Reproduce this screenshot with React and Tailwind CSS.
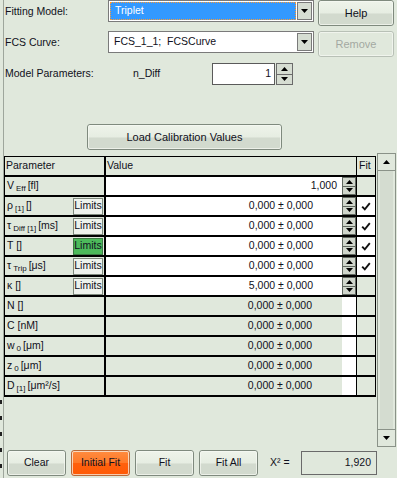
import React from "react";

const font = { fontFamily: '"Liberation Sans", Arial, sans-serif' };

function Tri({ down = false, size = 7 }) {
  return (
    <svg width={size} height={4} viewBox="0 0 7 4" className="block">
      {down ? <polygon points="0,0 7,0 3.5,4" fill="#000" /> : <polygon points="0,4 7,4 3.5,0" fill="#000" />}
    </svg>
  );
}

function Btn({ children, className = "", disabled = false, orange = false }) {
  const bg = orange
    ? "bg-[linear-gradient(to_bottom,#ff8c40_0%,#ff7a28_50%,#ff600c_52%,#ff5a06_100%)] border-[#b86a3a]"
    : disabled
    ? "bg-[#e0e8dc] border-[#b8c0b6]"
    : "bg-[linear-gradient(to_bottom,#eef3ea_0%,#e6ede2_50%,#d2dace_54%,#d2dace_100%)] border-[#7f8a7e]";
  return (
    <div
      className={`flex items-center justify-center rounded-[3px] border ${bg} ${
        disabled ? "text-[#a3a8a2]" : "text-[#101020]"
      } ${className}`}
    >
      <div className="flex h-full w-full items-center justify-center rounded-[2px] border border-[#f6f9f4]/70">{children}</div>
    </div>
  );
}

function Spin({ h = 18 }) {
  return (
    <div className="flex w-[14px] flex-col" style={{ height: h }}>
      <div className="flex flex-1 items-center justify-center border border-[#606860] bg-[#d0d6cc]">
        <Tri />
      </div>
      <div className="flex flex-1 items-center justify-center border border-t-0 border-[#606860] bg-[#d0d6cc]">
        <Tri down />
      </div>
    </div>
  );
}

function Check() {
  return (
    <svg width="10" height="9" viewBox="0 0 10 9">
      <path d="M1.2 4.6 L3.8 7.4 L8.8 1.2" stroke="#111" strokeWidth="1.9" fill="none" />
    </svg>
  );
}

function Sub({ children }) {
  return <span className="relative top-[2px] mx-[2px] text-[8px]">{children}</span>;
}

const rows = [
  { label: <>V<Sub>Eff</Sub>[fl]</>, value: "1,000", spin: true, white: true, right: true },
  { label: <>ρ<Sub>[1]</Sub>[]</>, value: "0,000 ± 0,000", spin: true, white: true, limits: "n", fit: true },
  { label: <>τ<Sub>Diff [1]</Sub>[ms]</>, value: "0,000 ± 0,000", spin: true, white: true, limits: "n", fit: true },
  { label: <>T []</>, value: "0,000 ± 0,000", spin: true, white: true, limits: "g", fit: true },
  { label: <>τ<Sub>Trip</Sub>[μs]</>, value: "0,000 ± 0,000", spin: true, white: true, limits: "n", fit: true },
  { label: <>κ []</>, value: "5,000 ± 0,000", spin: true, white: true, limits: "n" },
  { label: <>N []</>, value: "0,000 ± 0,000" },
  { label: <>C [nM]</>, value: "0,000 ± 0,000" },
  { label: <>w<Sub>0</Sub>[μm]</>, value: "0,000 ± 0,000" },
  { label: <>z<Sub>0</Sub>[μm]</>, value: "0,000 ± 0,000" },
  { label: <>D<Sub>[1]</Sub>[μm²/s]</>, value: "0,000 ± 0,000" },
];

function Row({ r }) {
  return (
    <div className="flex h-[20px] border-b-2 border-black">
      <div className="flex w-[99px] items-center justify-between pl-[2px] pr-[1px]">
        <span className="whitespace-nowrap">{r.label}</span>
        {r.limits && (
          <div
            className={`flex h-[17px] w-[30px] items-center justify-center border ${
              r.limits === "g" ? "border-[#3d7a45] bg-[#4dba5b]" : "border-[#7f8a7e] bg-[#eef2ec]"
            } text-[#101020]`}
          >
            Limits
          </div>
        )}
      </div>
      <div className="w-[2px] bg-black" />
      <div className={`flex w-[236px] items-center justify-end ${r.white ? "bg-white pr-[5px]" : "pr-[30px]"}`}>
        {r.right ? r.value : <span className={r.white ? "pr-[24px]" : ""}>{r.value}</span>}
      </div>
      <div className="flex w-[14px] items-center bg-white">{r.spin && <Spin />}</div>
      <div className="w-[1px] bg-black" />
      <div className={`flex w-[18px] items-center justify-center ${r.fit ? "bg-white" : ""}`}>{r.fit && <Check />}</div>
    </div>
  );
}

export default function App() {
  return (
    <div className="flex h-[478px] w-[397px] overflow-hidden bg-[#e0e8dc] text-[10.5px] text-[#101020]" style={font}>
      <div className="flex w-[3px] flex-col justify-end gap-[12px] pb-[10px]">
        {[0, 1, 2, 3, 4].map((i) => (
          <div key={i} className="h-[4px] w-[2px] bg-[#202020]" />
        ))}
      </div>
      <div className="w-[1px] bg-[#9ea69c]" />
      <div className="flex flex-1 flex-col">
        {/* row 1 */}
        <div className="flex h-[26px] items-start">
          <div className="w-[104px] pl-[1px] pt-[4px]">Fitting Model:</div>
          <div className="flex h-[22px] w-[206px] items-center border border-[#7a7a7a] bg-white p-[1px]">
            <div className="flex h-full flex-1 items-center border border-dotted border-[#ff9a30] bg-[#3399ff] pl-[4px] text-white">
              Triplet
            </div>
            <div className="ml-[1px] flex h-full w-[15px] items-center justify-center border border-[#7a7a7a] bg-[#d6ddd2]">
              <Tri down />
            </div>
          </div>
          <Btn className="ml-[4px] h-[26px] w-[76px] text-[11px]">Help</Btn>
        </div>
        {/* row 2 */}
        <div className="mt-[5px] flex h-[26px] items-start">
          <div className="w-[104px] pl-[1px] pt-[4px]">FCS Curve:</div>
          <div className="flex h-[22px] w-[206px] items-center border border-[#7a7a7a] bg-white p-[1px]">
            <div className="flex h-full flex-1 items-center pl-[4px] whitespace-pre">FCS_1_1;  FCSCurve</div>
            <div className="ml-[1px] flex h-full w-[15px] items-center justify-center border border-[#7a7a7a] bg-[#d6ddd2]">
              <Tri down />
            </div>
          </div>
          <Btn disabled className="ml-[4px] h-[26px] w-[76px] text-[11px]">Remove</Btn>
        </div>
        {/* row 3 */}
        <div className="mt-[6px] flex h-[22px] items-center">
          <div className="w-[129px] pl-[1px]">Model Parameters:</div>
          <div className="w-[79px]">n_Diff</div>
          <div className="flex h-[22px] w-[63px] items-center justify-end border border-[#5a5a5a] bg-white pr-[3px]">1</div>
          <div className="ml-[1px] flex h-[22px] w-[17px] flex-col">
            <div className="flex flex-1 items-center justify-center border border-[#6a6a6a] bg-[#d6ddd2]">
              <Tri />
            </div>
            <div className="flex flex-1 items-center justify-center border border-t-0 border-[#6a6a6a] bg-[#d6ddd2]">
              <Tri down />
            </div>
          </div>
        </div>
        {/* load button */}
        <div className="mt-[39px] flex">
          <Btn className="ml-[83px] h-[26px] w-[195px] text-[11px]">Load Calibration Values</Btn>
        </div>
        {/* table + scrollbar */}
        <div className="mt-[3px] flex h-[294px] items-start">
          <div className="mt-[3px] flex w-[372px] flex-col border-x border-t border-black">
            <div className="flex h-[20px] border-b-2 border-black">
              <div className="flex w-[99px] items-center pl-[1px]">Parameter</div>
              <div className="w-[2px] bg-black" />
              <div className="flex w-[250px] items-center pl-[1px]">Value</div>
              <div className="w-[1px] bg-black" />
              <div className="flex w-[18px] items-center pl-[2px]">Fit</div>
            </div>
            {rows.map((r, i) => (
              <Row key={i} r={r} />
            ))}
          </div>
          <div className="ml-[1px] flex h-full w-[19px] flex-col border border-[#8a9288] bg-[#d4dcd0]">
            <div className="flex h-[17px] items-center justify-center border-b border-[#8a9288] bg-[#e0e8dc]">
              <Tri />
            </div>
            <div className="flex-1 border-x-[2px] border-[#e0e8dc] bg-[#d4dcd0]" />
            <div className="flex h-[17px] items-center justify-center border-t border-[#8a9288] bg-[#e0e8dc]">
              <Tri down />
            </div>
          </div>
        </div>
        {/* bottom */}
        <div className="mt-[3px] flex h-[26px] items-center">
          <Btn className="ml-[3px] h-[26px] w-[59px]">Clear</Btn>
          <Btn orange className="ml-[5px] h-[26px] w-[59px]">Initial Fit</Btn>
          <Btn className="ml-[5px] h-[26px] w-[59px]">Fit</Btn>
          <Btn className="ml-[5px] h-[26px] w-[59px]">Fit All</Btn>
          <div className="ml-[12px] w-[31px]">X² =</div>
          <div className="flex h-[24px] w-[76px] items-center justify-end border border-[#6a6a6a] pr-[5px]">1,920</div>
        </div>
      </div>
    </div>
  );
}
